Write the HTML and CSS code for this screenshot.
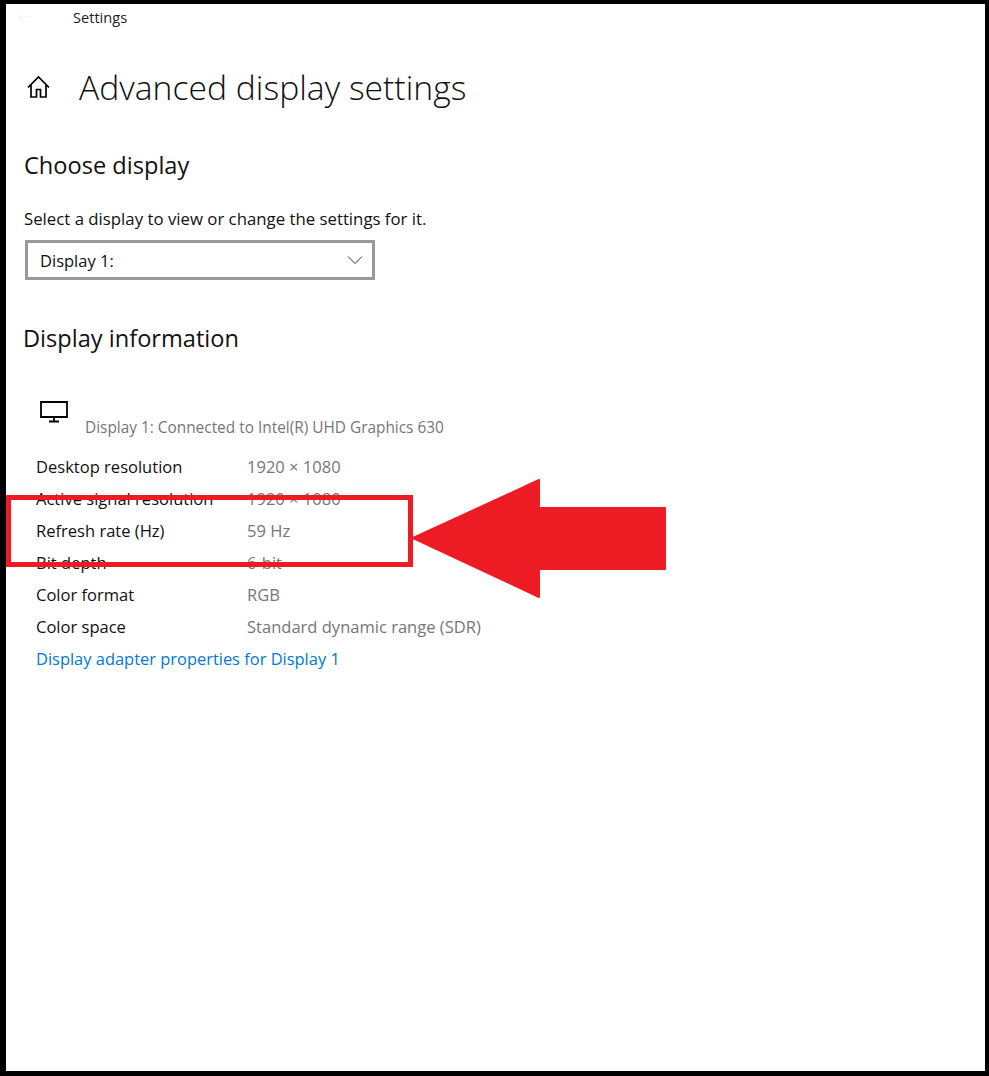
FILE: index.html
```html
<!DOCTYPE html>
<html lang="en">
<head>
    <meta charset="UTF-8">
    <title>Settings</title>
    <link rel="stylesheet" href="styles.css">
</head>
<body>
    <div class="frame">
        <div class="titlebar">
            <svg class="back-icon" width="16" height="14" viewBox="0 0 16 14"><path d="M15 7H1.500M7.500 1 1.500 7l6 6" fill="none" stroke="#f1f1f1" stroke-width="1"/></svg>
            <span class="app-name">Settings</span>
        </div>

        <div class="page-header">
            <svg class="home-icon" width="24" height="24" viewBox="0 0 24 24"><path d="M2 12.500 12.500 2 23 12.500M5 10v12h5.500v-7.500h4V22H20V10" fill="none" stroke="#000" stroke-width="1.700"/></svg>
            <h1>Advanced display settings</h1>
        </div>

        <h2 class="choose-title">Choose display</h2>
        <p class="select-label">Select a display to view or change the settings for it.</p>
        <div class="select-box">
            <span>Display 1:</span>
            <svg width="16" height="10" viewBox="0 0 16 10"><path d="M1 1.500 8 8.500l7-7" fill="none" stroke="#333" stroke-width="1"/></svg>
        </div>

        <h2 class="info-title">Display information</h2>

        <div class="monitor-row">
            <svg class="monitor-icon" width="30" height="22" viewBox="0 0 30 22"><path d="M2 1h26v15H2zM15 16v4M10 20.500h10" fill="none" stroke="#000" stroke-width="1.800"/></svg>
            <span class="monitor-name">Display 1: Connected to Intel(R) UHD Graphics 630</span>
        </div>

        <div class="info-list">
            <div class="info-row"><span class="info-key">Desktop resolution</span><span class="info-value">1920 × 1080</span></div>
            <div class="info-row"><span class="info-key">Active signal resolution</span><span class="info-value">1920 × 1080</span></div>
            <div class="info-row"><span class="info-key">Refresh rate (Hz)</span><span class="info-value">59 Hz</span></div>
            <div class="info-row"><span class="info-key">Bit depth</span><span class="info-value">6-bit</span></div>
            <div class="info-row"><span class="info-key">Color format</span><span class="info-value">RGB</span></div>
            <div class="info-row"><span class="info-key">Color space</span><span class="info-value">Standard dynamic range (SDR)</span></div>
            <a class="adapter-link" href="#">Display adapter properties for Display 1</a>
        </div>

        <!-- red annotation on top of the screenshot -->
        <div class="highlight"></div>
        <svg class="arrow" width="256" height="120" viewBox="0 0 256 120"><path d="M2 59 128 1V29H254V90H128V118Z" fill="#ed1c24" stroke="#ed1c24" stroke-width="2" stroke-linejoin="round"/></svg>
    </div>
</body>
</html>
```

FILE: styles.css
```css
* {
    margin: 0;
    padding: 0;
    box-sizing: border-box;
}

body {
    background-color: white;
    font-family: 'Open Sans', 'Noto Sans', sans-serif;
    color: #111;
}

.frame {
    position: relative;
    width: 989px;
    height: 1076px;
    border-style: solid;
    border-color: black;
    border-width: 4px 4px 5px 6px;
    overflow: hidden;
}

.titlebar {
    display: flex;
    align-items: center;
    height: 26px;
    padding-left: 11px;
}

.back-icon {
    flex: none;
}

.app-name {
    margin-left: 40px;
    font-size: 14.600px;
    color: #222;
}

.page-header {
    display: flex;
    align-items: center;
    margin-top: 35px;
    padding-left: 20px;
}

.home-icon {
    flex: none;
}

h1 {
    margin-left: 29px;
    font-size: 33.700px;
    line-height: 44px;
    font-weight: 300;
    color: #111;
}

h2 {
    font-size: 23.600px;
    line-height: 32px;
    font-weight: 400;
    color: #111;
}

.choose-title {
    margin-top: 40px;
    padding-left: 18px;
}

.select-label {
    margin-top: 27px;
    padding-left: 18px;
    font-size: 16.800px;
    line-height: 22px;
}

.select-box {
    display: flex;
    align-items: center;
    justify-content: space-between;
    width: 350px;
    height: 40px;
    margin-top: 10px;
    margin-left: 19px;
    padding: 0 9px 0 12px;
    border: 3px solid #999;
    font-size: 16.500px;
}

.info-title {
    margin-top: 42px;
    padding-left: 17px;
}

.monitor-row {
    display: flex;
    align-items: flex-start;
    height: 51px;
    margin-top: 45px;
    padding-left: 33px;
}

.monitor-icon {
    flex: none;
    margin-top: 2px;
}

.monitor-name {
    margin-top: 19px;
    margin-left: 16px;
    font-size: 15.400px;
    line-height: 20px;
    color: #767676;
}

.info-list {
    display: flex;
    flex-direction: column;
    padding-left: 30px;
}

.info-row {
    display: flex;
    height: 32px;
    align-items: center;
    font-size: 16.550px;
}

.info-key {
    width: 211px;
}

.info-value {
    color: #767676;
}

.adapter-link {
    height: 32px;
    margin-top: 1px;
    line-height: 32px;
    font-size: 16.450px;
    color: #0078d7;
    text-decoration: none;
}

/* annotation layer */
.highlight {
    position: absolute;
    left: 0;
    top: 491px;
    width: 407px;
    height: 72px;
    border: 5px solid #ed1c24;
}

.arrow {
    position: absolute;
    left: 405px;
    top: 475px;
}
```
